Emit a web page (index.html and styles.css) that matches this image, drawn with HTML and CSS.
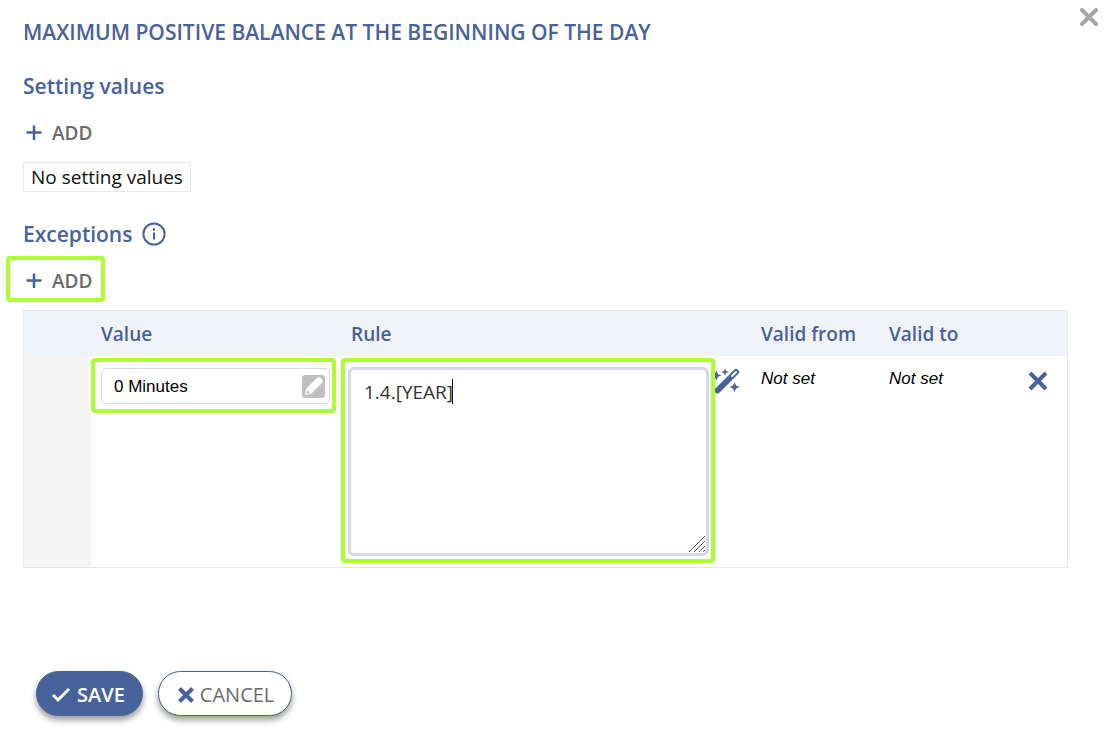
FILE: index.html
```html
<!DOCTYPE html>
<html lang="en">
<head>
  <meta charset="UTF-8" />
  <meta name="viewport" content="width=device-width, initial-scale=1.0" />
  <title>Maximum positive balance at the beginning of the day</title>
  <link rel="stylesheet" href="styles.css">
</head>
<body>
  <div class="dialog">
    <button type="button" class="close-btn" aria-label="Close">
      <svg width="20" height="20" viewBox="0 0 20 20"><path d="M3 3L17 17M17 3L3 17" /></svg>
    </button>

    <h1>MAXIMUM POSITIVE BALANCE AT THE BEGINNING OF THE DAY</h1>

    <h2>Setting values</h2>
    <button type="button" class="add-btn">
      <svg width="16" height="16" viewBox="0 0 16 16"><path d="M8 0.5V15M0.5 7.5H15.5" /></svg>
      ADD
    </button>
    <p class="empty">No setting values</p>

    <h2>
      Exceptions
      <svg class="info" width="24" height="24" viewBox="0 0 24 24">
        <circle cx="12" cy="12" r="10.6" />
        <path d="M12 10.5V17.5M12 6.3V8.7" />
      </svg>
    </h2>
    <button type="button" class="add-btn highlight">
      <svg width="16" height="16" viewBox="0 0 16 16"><path d="M8 0.5V15M0.5 7.5H15.5" /></svg>
      ADD
    </button>

    <form>
      <table>
        <thead>
          <tr>
            <th class="col-handle"></th>
            <th class="col-value">Value</th>
            <th>Rule</th>
            <th class="col-from">Valid from</th>
            <th class="col-to">Valid to</th>
            <th class="col-delete"></th>
          </tr>
        </thead>
        <tbody>
          <tr>
            <td class="handle"></td>
            <td class="value-cell">
              <div class="highlight value-box">
                <div class="value-field">
                  <input type="text" id="value" aria-label="Value" value="0 Minutes" />
                  <button type="button" class="edit-btn" aria-label="Edit value">
                    <svg width="23" height="23" viewBox="0 0 23 23">
                      <path d="M3 20L4.2 13.8L14.2 3.8L19.2 8.8L9.2 18.8Z" />
                      <path d="M13.8 4.2L16.2 2.2Q17.2 1.7 18 2.4L20.6 5Q21.3 5.9 20.8 6.8L18.8 9.2Z" />
                      <circle cx="5.8" cy="17.2" r="1.3" />
                    </svg>
                  </button>
                </div>
              </div>
            </td>
            <td class="rule-cell">
              <div class="rule-row">
                <div class="highlight rule-box">
                  <textarea id="rule" aria-label="Rule">1.4.[YEAR]</textarea>
                  <span class="caret"></span>
                  <svg class="grip" width="18" height="18" viewBox="0 0 18 18">
                    <path d="M1 17L17 1M6 17L17 6M11 17L17 11M15 17L17 15" />
                  </svg>
                </div>
                <button type="button" class="wand-btn" aria-label="Rule wizard">
                  <svg width="26" height="28" viewBox="0 0 26 28">
                    <path class="stick" d="M2.5 23.5L21 5" />
                    <path class="tip" d="M17 9L21 5" />
                    <path d="M1.5 3.5L3 7.2L6.5 8.5L3 9.8L1.5 13.5L0 10.5V6.5Z" />
                    <path d="M10 1L11 4L14 5L11 6L10 9L9 6L6 5L9 4Z" />
                    <path d="M19.5 15L21 18.5L24.5 20L21 21.5L19.5 25L18 21.5L14.5 20L18 18.5Z" />
                  </svg>
                </button>
              </div>
            </td>
            <td class="date">Not set</td>
            <td class="date">Not set</td>
            <td class="delete-cell">
              <button type="button" class="delete-btn" aria-label="Delete">
                <svg width="20" height="20" viewBox="0 0 20 20"><path d="M2 2L18 18M18 2L2 18" /></svg>
              </button>
            </td>
          </tr>
        </tbody>
      </table>

      <div class="actions">
        <button type="submit" class="btn save">
          <svg width="20" height="16" viewBox="0 0 20 16"><path d="M2 8L7 13L18 2" /></svg>
          SAVE
        </button>
        <button type="button" class="btn cancel">
          <svg width="16" height="16" viewBox="0 0 16 16"><path d="M1.5 1.5L14.5 14.5M14.5 1.5L1.5 14.5" /></svg>
          CANCEL
        </button>
      </div>
    </form>
  </div>
</body>
</html>
```

FILE: styles.css
```css
* {
  box-sizing: border-box;
}
body {
  font-family: 'Open Sans', sans-serif;
  font-size: 19px;
  background-color: #fff;
  color: #111;
  margin: 0;
}
button {
  display: flex;
  align-items: center;
  font-family: inherit;
  background: none;
  border: none;
  padding: 0;
  cursor: pointer;
}
svg {
  display: block;
  fill: none;
  stroke: #48629b;
}
.dialog {
  position: relative;
  padding: 18px 44px 28px 23px;
}
.close-btn {
  position: absolute;
  top: 7px;
  right: 13px;
}
.close-btn svg {
  stroke: #a5a5a5;
  stroke-width: 4;
  stroke-linecap: round;
}
h1, h2 {
  display: flex;
  align-items: center;
  gap: 10px;
  color: #48629b;
  font-size: 21px;
  font-weight: 600;
  line-height: 28px;
  margin: 0;
}
h2 {
  margin-top: 26px;
}
.info {
  stroke-width: 2;
}
.add-btn {
  gap: 10px;
  height: 46px;
  margin: 10px 0 6px -17px;
  padding: 0 9px 0 16px;
  border: 4px solid transparent;
  color: #6b6b6b;
  font-size: 19px;
  font-weight: 600;
}
.add-btn svg {
  stroke-width: 2.5;
}
.empty {
  width: fit-content;
  margin: 0 0 28px;
  padding: 0 7px;
  border: 1px solid #e8e8e8;
  line-height: 28px;
}
.highlight {
  border: 4px solid #adff2f;
  border-radius: 4px;
}
.add-btn.highlight {
  margin-top: 8px;
  margin-bottom: 8px;
  padding-top: 3px;
}
table {
  width: 100%;
  table-layout: fixed;
  border-collapse: separate;
  border-spacing: 0;
  border: 1px solid #e8e8e8;
}
th {
  height: 45px;
  padding: 0 10px;
  background-color: #f0f3f8;
  color: #48629b;
  font-size: 19px;
  font-weight: 600;
  text-align: left;
}
td {
  padding: 2px 0 4px;
  vertical-align: top;
}
.col-handle {
  width: 67px;
}
.col-value {
  width: 250px;
}
.col-from {
  width: 128px;
}
.col-to {
  width: 138px;
}
.col-delete {
  width: 50px;
}
.handle {
  background-color: #f5f5f5;
}
.value-box {
  width: 245px;
  padding: 6px 2px 5px 6px;
}
.value-field {
  display: flex;
  align-items: center;
  height: 36px;
  padding: 0 4px 0 12px;
  border: 1px solid #dadada;
  border-radius: 5px;
}
.value-field input {
  flex: 1;
  min-width: 0;
  padding: 2px 0 0;
  border: none;
  outline: none;
  font-family: 'Liberation Sans', sans-serif;
  font-size: 17px;
}
.edit-btn {
  background-color: #c0c0c0;
  border-radius: 3px;
}
.edit-btn svg {
  fill: #fff;
  stroke: none;
}
.edit-btn circle {
  fill: #c0c0c0;
}
.rule-row {
  display: flex;
  align-items: flex-start;
  padding-right: 10px;
}
.rule-box {
  position: relative;
  flex: 1;
  padding: 5px 2px 3px 3px;
}
textarea {
  display: block;
  width: 100%;
  height: 189px;
  padding: 9px 13px;
  border: 3px solid #d5d7ee;
  border-radius: 6px;
  outline: none;
  resize: none;
  color: #333;
  font-family: 'Open Sans', sans-serif;
  font-size: 19px;
  line-height: 26px;
}
.caret {
  position: absolute;
  left: 107px;
  top: 17px;
  width: 1px;
  height: 25px;
  background-color: #111;
}
.grip {
  position: absolute;
  right: 5px;
  bottom: 6px;
  stroke: #555;
}
.wand-btn {
  margin-top: 9px;
}
.wand-btn svg {
  fill: #48629b;
  stroke: none;
}
.wand-btn .stick {
  stroke: #48629b;
  stroke-width: 6;
  stroke-linecap: round;
}
.wand-btn .tip {
  stroke: #fff;
  stroke-width: 2;
  stroke-linecap: round;
}
.date {
  padding: 13px 10px;
  font-family: 'Liberation Sans', sans-serif;
  font-size: 17px;
  font-style: italic;
  color: #000;
}
.delete-cell {
  padding-top: 15px;
}
.delete-btn {
  margin-left: 11px;
}
.delete-btn svg {
  stroke-width: 4;
}
.actions {
  display: flex;
  gap: 15px;
  margin-top: 103px;
  padding-left: 13px;
}
.btn {
  gap: 6px;
  height: 45px;
  padding: 2px 17px 0 14px;
  border: 1px solid #48629b;
  border-radius: 23px;
  box-shadow: 0 4px 6px rgba(0,0,0,0.4);
  font-size: 20px;
}
.save {
  background-color: #48629b;
  color: #fff;
  font-weight: 600;
}
.save svg {
  stroke: #fff;
  stroke-width: 3;
}
.cancel {
  padding-left: 19px;
  background-color: #fff;
  color: #6b6b6b;
}
.cancel svg {
  stroke-width: 4;
}
```
